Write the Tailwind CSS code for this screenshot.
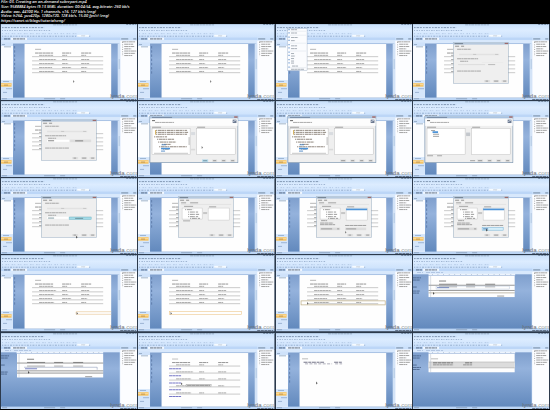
<!DOCTYPE html>
<html lang="en">
<head>
  <meta charset="UTF-8">
  <meta name="viewport" content="width=device-width, initial-scale=1.0">
  <title>03. Creating an on-demand subreport.mp4</title>
  <script src="https://cdn.jsdelivr.net/npm/@tailwindcss/browser@4"></script>
</head>
<body class="bg-black text-white font-['Noto_Sans','Open_Sans',sans-serif] min-h-screen overflow-x-hidden">
  <!-- Shared drawings for the frames -->
  <svg class="absolute w-0 h-0" aria-hidden="true">
    <defs>
      <linearGradient id="bar" x1="0" y1="0" x2="0" y2="1">
        <stop offset="0" stop-color="#c8e0fb"/><stop offset=".4" stop-color="#dcecff"/><stop offset="1" stop-color="#c8dffb"/>
      </linearGradient>
      <linearGradient id="desk" x1="0" y1="0" x2="0" y2="1">
        <stop offset="0" stop-color="#7f9fcd"/><stop offset=".3" stop-color="#94b2dc"/><stop offset="1" stop-color="#6289bd"/>
      </linearGradient>

      <!-- Application window -->
      <g id="app">
        <rect width="136" height="76" fill="#cbe1fb"/>
        <rect width="136" height="16" fill="url(#bar)"/>
        <rect width="136" height="1" fill="#b4cae2"/>
        <g opacity=".6">
          <path d="M52 .8H76" stroke="#62768c" stroke-width=".8" stroke-dasharray="3 .6 2 .5"/>
          <path d="M125 .6H135" stroke="#51657e" stroke-width="1" stroke-dasharray="2 1"/>
          <path d="M1 3.6H43" stroke="#3f5676" stroke-width=".9" stroke-dasharray="1.6 1 2.4 .8 2 1.2"/>
          <path d="M1 6.6H50" stroke="#7892b6" stroke-width="1" stroke-dasharray="1 1.4 1.5 1"/>
          <path d="M1 9.6H76" stroke="#95aed0" stroke-width=".8" stroke-dasharray="1 2.5 1.6 1"/>
          <path d="M1 12.2H89" stroke="#6984ac" stroke-width=".9" stroke-dasharray="1.2 1.2 2 1.2"/>
        </g>
        <rect x="76" y="10.8" width="12" height="2" fill="#f6fbff"/>
        <path d="M80 11.8H84" stroke="#a9b7c7" stroke-width=".6"/>
        <rect y="13.6" width="119" height="2.4" fill="#bcd6f7"/>
        <rect x="10" y="13.7" width="16" height="2.2" fill="#f2f8ff"/>
        <path d="M3 14.9H9M12 14.9H24" stroke="#4a5c74" stroke-width=".9" stroke-dasharray="3 .4"/>
        <rect y="16" width="119" height="3.5" fill="#d8e8fc"/>
        <rect x="119" y="16.5" width="17" height="57" fill="#fcfdff"/>
        <path d="M120 14.9H127M132 14.9H135" stroke="#5d718a" stroke-width=".8"/>
        <path d="M121 17.8H134M123 20.2H132M123 22.5H133M123 24.8H130M123 27H135M123 29.3H134M123 31.5H131" stroke="#8d8d8d" stroke-width=".8" stroke-dasharray="4 .3 2 .3"/>
        <path d="M121.4 18V32" stroke="#8a8a8a" stroke-width=".7" stroke-dasharray="1 1.3"/>
        <rect y="73.4" width="136" height="2.6" fill="#bcd5f4"/>
        <path d="M1 74.6H6M43 74.6H54M59 74.6H64" stroke="#869cb8" stroke-width=".8"/>
        <path d="M119 75.3H135" stroke="#65768d" stroke-width="1" stroke-dasharray="3 .6"/>
      </g>

      <!-- Outline pane and canvas of the layout view -->
      <g id="layout">
        <rect y="19.5" width="12" height="54" fill="#fbfdff"/>
        <rect y="18.5" width="12" height="3.5" fill="#cfe2fa"/>
        <path d="M1 20.5H4M3 22.8H10" stroke="#8ba2bd" stroke-width=".8"/>
        <rect y="56" width="12" height="17.5" fill="#d5e6fb"/>
        <path d="M2 57.4H8M5 64.6H11M2 68.3H6" stroke="#8fa9ca" stroke-width=".8"/>
        <rect y="59" width="10.5" height="3.6" fill="#f6c363"/>
        <rect y="59.6" width="10.5" height="1.4" fill="#fbd996"/>
        <path d="M3 61H7" stroke="#a98549" stroke-width=".7"/>
        <rect x="12" y="19.5" width="106" height="54" fill="url(#desk)"/>
        <path d="M13.6 22V50" stroke="#5c7ba9" stroke-width=".9" stroke-dasharray="2.4 1.8"/>
        <rect x="116.5" y="19.5" width="2.5" height="54" fill="#d3e3f7"/>
        <path d="M118 35V45" stroke="#9db6d4" stroke-width=".6"/>
        <rect x="23.5" y="20" width="86.5" height="53.5" fill="#fefefe"/>
      </g>

      <!-- Report table -->
      <g id="table" opacity=".75">
        <path d="M34 25.3H40" stroke="#8a8a8a" stroke-width=".8"/>
        <path d="M34 29H52M61 29H70M80 29H90" stroke="#666" stroke-width=".9" stroke-dasharray="3 .3 4 .4"/>
        <path d="M31 32.6H102M31 36.8H102M31 40.8H102M31 44.8H102M31 48.6H102" stroke="#8c8c8c" stroke-width=".6"/>
        <path d="M38 31.3H52M61 31.3H66M80 31.3H85M38 35.5H55M61 35.5H66M80 35.5H88M38 39.5H53M61 39.5H67M80 39.5H88M38 43.5H51M61 43.5H70M80 43.5H86M38 47.4H53M61 47.4H66M80 47.4H85" stroke="#777" stroke-width=".8" stroke-dasharray="3 .3 2 .3"/>
      </g>

      <!-- Dialog frame with tabs -->
      <g id="dialog">
        <rect x="40" y="18.2" width="55.5" height="41.3" fill="#5f7f9e" opacity=".6"/>
        <rect x="40.5" y="18.6" width="54.5" height="40.4" fill="#efefef"/>
        <rect x="40.5" y="18.6" width="54.5" height="2" fill="#b6c9de"/>
        <path d="M41.5 19.6H50" stroke="#5d6a7b" stroke-width=".8"/>
        <path d="M91.5 19.4H95" stroke="#9c6a6b" stroke-width="1.2"/>
        <path d="M42 22.2H46M48 22.2H51" stroke="#808080" stroke-width=".8"/>
      </g>
      <g id="dialog-buttons">
        <path d="M71 57H77M80 57H86M88.5 57H94" stroke="#e0e0e0" stroke-width="2.2"/>
        <path d="M72.5 57H75M81 57H85M90 57H93" stroke="#8a8a8a" stroke-width=".8"/>
      </g>
      <g id="options">
        <use href="#dialog"/>
        <path d="M44 25.2H58M44 34.7H65M47 37.2H55M44 47H68" stroke="#969696" stroke-width=".8" stroke-dasharray="4 .3 2 .3"/>
        <path d="M46 30.4H86" stroke="#e2e2e2" stroke-width="1.4"/>
        <path d="M60 30.4H63M82 30.4H85" stroke="#c4c4c4" stroke-width=".9"/>
        <rect x="46" y="38.7" width="22" height="2" fill="#fff"/>
        <rect x="69" y="38.5" width="21" height="2.6" fill="#dedede"/>
        <use href="#dialog-buttons"/>
      </g>

      <!-- Dialog with source tree and column list -->
      <g id="columns">
        <use href="#dialog"/>
        <path d="M43 24.8H48M52 24.8H60M46 28.3H55M71 28.8H78" stroke="#919191" stroke-width=".8"/>
        <path d="M43 26.4H93" stroke="#dcdcdc" stroke-width=".6"/>
        <rect x="44" y="30" width="20" height="11" fill="#fff" stroke="#bbb" stroke-width=".4"/>
        <path d="M47 31.6H55M50 34H60M50 36.3H61M50 38.6H60M52 40.3H62" stroke="#858585" stroke-width=".8" stroke-dasharray="1 .8 4 .3"/>
        <path d="M65 35H69" stroke="#c6c6c6" stroke-width="2"/>
        <rect x="70" y="30" width="21" height="12" fill="#fff" stroke="#bbb" stroke-width=".4"/>
        <use href="#dialog-buttons"/>
      </g>
      <g id="columns-full">
        <use href="#columns"/>
        <rect x="70" y="30.5" width="21" height="1.7" fill="#4e94d8"/>
        <path d="M45 42.6H51M44 45H57M44 46.6H59M69 47.4H90" stroke="#8f8f8f" stroke-width=".8" stroke-dasharray="4 .3"/>
        <rect x="44" y="49.5" width="20" height="2.6" fill="#dcdcdc"/>
        <path d="M45 50.8H56M61 50.8H63" stroke="#8c8c8c" stroke-width=".8"/>
        <rect x="69" y="49.5" width="21" height="2.6" fill="#ddd"/>
        <path d="M70 50.8H80" stroke="#8c8c8c" stroke-width=".8"/>
      </g>

      <!-- Table wizard -->
      <g id="wizard">
        <rect x="11.5" y="14.8" width="88.5" height="47" fill="#7791ad"/>
        <rect x="12.2" y="15.2" width="87.2" height="46" fill="#efefef"/>
        <rect x="12.2" y="15.2" width="87.2" height="2.3" fill="#a9c3e1"/>
        <path d="M14 16.4H34" stroke="#6a7c93" stroke-width=".8"/>
        <path d="M96 16H99.4" stroke="#a3605e" stroke-width="1.3"/>
        <rect x="12.2" y="17.6" width="87.2" height="7.2" fill="#fdfdfd"/>
        <path d="M14 19.6H17" stroke="#555" stroke-width=".9"/>
        <path d="M17 21.4H36" stroke="#969696" stroke-width=".8" stroke-dasharray="4 .3 2 .3"/>
        <rect x="94.5" y="18.6" width="3.8" height="3.4" fill="#6d7a90"/>
        <path d="M95 20.5L98 19" stroke="#d8e2f0" stroke-width=".8"/>
        <path d="M14 26.2H23M59 26.2H67" stroke="#919191" stroke-width=".8"/>
        <rect x="14" y="27.4" width="38" height="26" fill="#fff" stroke="#b5b5b5" stroke-width=".4"/>
        <rect x="58.5" y="27.4" width="38.5" height="26" fill="#fff" stroke="#b5b5b5" stroke-width=".4"/>
        <rect x="53" y="31" width="4" height="3" fill="#d9dce0"/>
        <path d="M64 59.6H70M74 59.6H79M83 59.6H88M92 59.6H97" stroke="#dedede" stroke-width="2.2"/>
        <path d="M65 59.6H69M75 59.6H78M84 59.6H87M93 59.6H96" stroke="#858585" stroke-width=".8"/>
      </g>
      <g id="source-tree">
        <path d="M18 29.3H49M18 31.3H50M18 33.2H49M16 35.8H29M19 38.2H36M20 41H38M24 43.3H33M21 45.7H49M25 48H31" stroke="#857a70" stroke-width=".9" stroke-dasharray="1 .7 4 .3 2.5 .4"/>
        <path d="M17.5 29V33.6" stroke="#d9b768" stroke-width="1.1"/>
        <rect x="23" y="46.7" width="9" height="1.6" fill="#4e94d8"/>
        <path d="M23.5 43.7H28M23 50H27" stroke="#4a85c4" stroke-width=".9"/>
        <path d="M16 52.2H50" stroke="#d2d2d2" stroke-width="1.2"/>
        <path d="M51 36V44" stroke="#a0a0a0" stroke-width=".7"/>
        <path d="M53 48.5H57" stroke="#dadada" stroke-width="1.6"/>
      </g>

      <!-- Report designer canvas -->
      <g id="designer">
        <rect y="19.3" width="118.5" height="54.2" fill="url(#desk)"/>
        <rect x="15.5" y="18.6" width="86.5" height="1.8" fill="#edf4fd"/>
        <path d="M19 19.5H100" stroke="#7f94b0" stroke-width=".7" stroke-dasharray=".6 5"/>
        <path d="M4 17.5H10M13 17.5H30" stroke="#a6bcda" stroke-width=".8" stroke-dasharray="4 1"/>
      </g>

      <g id="mark">
        <text x="109" y="74" font-size="6" fill="#686d73" font-family="Liberation Sans, sans-serif">lynda<tspan fill="#989da2">.com</tspan></text>
      </g>
    </defs>
  </svg>

  <!-- File details -->
  <header class="h-[23px] flex flex-col justify-between px-px text-[4px] leading-[4px] font-medium italic whitespace-nowrap">
    <p>File: 03. Creating an on-demand subreport.mp4</p>
    <p>Size: 9588884 bytes (9.13 MiB), duration: 00:04:54, avg.bitrate: 260 kb/s</p>
    <p>Audio: aac, 44100 Hz, 1 channels, s16, 127 kb/s (eng)</p>
    <p>Video: h264, yuv420p, 1280x720, 128 kb/s, 15.00 fps(r) (eng)</p>
    <p>https://sanet.st/blogs/tutorialseng/</p>
  </header>

  <!-- Frames -->
  <main class="grid grid-cols-4 gap-px px-px mt-px bg-[#2c3a4c]">
    <!-- Row 1 -->
    <svg class="block w-full" viewBox="0 0 136 76" role="img" aria-label="Report preview">
      <use href="#app"/><use href="#layout"/><use href="#table"/>
      <path d="M72 56V58.6L73.4 57.6Z" fill="#777"/>
      <use href="#mark"/>
    </svg>
    <svg class="block w-full" viewBox="0 0 136 76" role="img" aria-label="Report preview">
      <use href="#app"/><use href="#layout"/><use href="#table"/>
      <path d="M72 56V58.6L73.4 57.6Z" fill="#777"/>
      <use href="#mark"/>
    </svg>
    <svg class="block w-full" viewBox="0 0 136 76" role="img" aria-label="Insert menu open">
      <use href="#app"/><use href="#layout"/><use href="#table"/>
      <rect x="11.5" y="4.5" width="19.5" height="42" fill="#fbfcfe" stroke="#9aabc0" stroke-width=".4"/>
      <path d="M15 5.7H21M15 9H21M15 13.5H22M15 16.6H19M15 21.8H21M15 24.6H21M15 29.5H18M15 32H19M15 34.5H18M15 37H18M15 39H18M16 42H22M15 45.2H28" stroke="#949ca6" stroke-width=".8" stroke-dasharray="3 .3"/>
      <path d="M13 5V46" stroke="#6c9ad2" stroke-width="1.2" stroke-dasharray="1.2 2.1 1.2 3"/>
      <path d="M14 7.2H30M14 11.2H30M14 19.2H30M14 27H30M14 43.6H30" stroke="#d2d9e2" stroke-width=".4"/>
      <use href="#mark"/>
    </svg>
    <svg class="block w-full" viewBox="0 0 136 76" role="img" aria-label="Hyperlink dialog">
      <use href="#app"/><use href="#layout"/><use href="#table"/><use href="#options"/>
      <rect x="45" y="38.4" width="46" height="3.6" fill="#efefef"/>
      <path d="M45 40.5H72" stroke="#dadada" stroke-width=".8"/>
      <path d="M75 40.5H82" stroke="#b5b5b5" stroke-width=".9"/>
      <use href="#mark"/>
    </svg>

    <!-- Row 2 -->
    <svg class="block w-full" viewBox="0 0 136 76" role="img" aria-label="Target document">
      <use href="#app"/><use href="#layout"/><use href="#table"/><use href="#options"/>
      <path d="M47 39.7H53M74 39.8H82" stroke="#6c6c6c" stroke-width=".8"/>
      <use href="#mark"/>
    </svg>
    <svg class="block w-full" viewBox="0 0 136 76" role="img" aria-label="Select data">
      <use href="#app"/><use href="#layout"/><use href="#wizard"/><use href="#source-tree"/>
      <rect x="64" y="58.4" width="6" height="2.4" fill="#b4dcee"/>
      <path d="M65 59.6H69" stroke="#6a8999" stroke-width=".8"/>
      <path d="M63.5 45V47.6L65 46.6Z" fill="#777"/>
      <use href="#mark"/>
    </svg>
    <svg class="block w-full" viewBox="0 0 136 76" role="img" aria-label="Select data">
      <use href="#app"/><use href="#layout"/><use href="#wizard"/><use href="#source-tree"/>
      <use href="#mark"/>
    </svg>
    <svg class="block w-full" viewBox="0 0 136 76" role="img" aria-label="Select columns">
      <use href="#app"/><use href="#layout"/><use href="#wizard"/>
      <path d="M18 29.5H22M20 33.2H26M20 35.3H26" stroke="#8c8c8c" stroke-width=".8"/>
      <rect x="19.5" y="30.2" width="5.5" height="1.8" fill="#4e94d8"/>
      <path d="M53 33.5H57" stroke="#c3c7cc" stroke-width="3"/>
      <path d="M14 54.6H20M24 54.6H29" stroke="#a8a8a8" stroke-width="1"/>
      <path d="M57 59.6H62" stroke="#8c8c8c" stroke-width=".8"/>
      <use href="#mark"/>
    </svg>

    <!-- Row 3 -->
    <svg class="block w-full" viewBox="0 0 136 76" role="img" aria-label="Target document">
      <use href="#app"/><use href="#layout"/><use href="#table"/><use href="#options"/>
      <rect x="68" y="39" width="22" height="2.4" fill="#a3dbe8" stroke="#72b8ca" stroke-width=".5"/>
      <path d="M47 40H53M74 40.3H82" stroke="#567883" stroke-width=".7"/>
      <path d="M75 57.6V60.5L76.5 59.2Z" fill="#444"/>
      <use href="#mark"/>
    </svg>
    <svg class="block w-full" viewBox="0 0 136 76" role="img" aria-label="Linked columns">
      <use href="#app"/><use href="#layout"/><use href="#table"/><use href="#columns"/>
      <path d="M45 42.8H52" stroke="#999" stroke-width=".8"/>
      <use href="#mark"/>
    </svg>
    <svg class="block w-full" viewBox="0 0 136 76" role="img" aria-label="Linked columns">
      <use href="#app"/><use href="#layout"/><use href="#table"/><use href="#columns-full"/>
      <path d="M69 53V55.4L70.4 54.4Z" fill="#777"/>
      <use href="#mark"/>
    </svg>
    <svg class="block w-full" viewBox="0 0 136 76" role="img" aria-label="Linked columns">
      <use href="#app"/><use href="#layout"/><use href="#table"/><use href="#columns-full"/>
      <rect x="69" y="49.5" width="21" height="2.6" fill="#d6eefa" stroke="#75b5db" stroke-width=".5"/>
      <path d="M70 50.8H75" stroke="#4b80b6" stroke-width="1"/>
      <path d="M73 50.5V53.4L74.6 52.2Z" fill="#444"/>
      <use href="#mark"/>
    </svg>

    <!-- Row 4 -->
    <svg class="block w-full" viewBox="0 0 136 76" role="img" aria-label="New footer cell">
      <use href="#app"/><use href="#layout"/><use href="#table"/>
      <path d="M110 56.6H75V59.2H110" fill="none" stroke="#e8c592" stroke-width=".6"/>
      <path d="M75.5 57V59.6L77 58.5Z" fill="#666"/>
      <use href="#mark"/>
    </svg>
    <svg class="block w-full" viewBox="0 0 136 76" role="img" aria-label="New footer row">
      <use href="#app"/><use href="#layout"/><use href="#table"/>
      <rect x="31.5" y="56.6" width="72" height="2.6" fill="none" stroke="#edc78c" stroke-width=".6"/>
      <path d="M32.5 57V59.6L34 58.5Z" fill="#666"/>
      <use href="#mark"/>
    </svg>
    <svg class="block w-full" viewBox="0 0 136 76" role="img" aria-label="Row selected">
      <use href="#app"/><use href="#layout"/><use href="#table"/>
      <rect x="25" y="45.8" width="84" height="4" fill="none" stroke="#bfad84" stroke-width=".7"/>
      <path d="M31 47V49.6L32.5 48.5Z" fill="#666"/>
      <use href="#mark"/>
    </svg>
    <svg class="block w-full" viewBox="0 0 136 76" role="img" aria-label="Report designer">
      <use href="#app"/><use href="#designer"/>
      <rect x="15.5" y="20.8" width="86" height="21.2" fill="#fefefe"/>
      <path d="M0 22.8H8M0 25H7M0 32H4M0 36H7M0 38H6" stroke="#4b658d" stroke-width=".9" stroke-dasharray="3 .3"/>
      <path d="M15.5 30.2H101.5M15.5 35.4H101.5" stroke="#555" stroke-width=".6"/>
      <path d="M15.5 37.8H101.5" stroke="#9c907a" stroke-width=".6"/>
      <path d="M17.6 21V42" stroke="#a1aebe" stroke-width=".4"/>
      <path d="M26 26H33M26 29.2H44M53 29.2H62M72 29.2H82" stroke="#777" stroke-width=".9"/>
      <path d="M26 31.8H44M53 31.8H62M72 31.8H82" stroke="#8c8c8c" stroke-width=".7"/>
      <rect x="23" y="31" width="73" height="3" fill="none" stroke="#a5b7d2" stroke-width=".4"/>
      <path d="M24 32.6H36" stroke="#5870b1" stroke-width=".8"/>
      <path d="M20 37V39.6L21.5 38.5Z" fill="#444"/>
      <path d="M84 41H91" stroke="#888" stroke-width=".8"/>
      <use href="#mark"/>
    </svg>

    <!-- Row 5 -->
    <svg class="block w-full" viewBox="0 0 136 76" role="img" aria-label="Report designer">
      <use href="#app"/><use href="#designer"/>
      <rect x="16" y="20.8" width="86" height="23.6" fill="#fefefe"/>
      <path d="M0 22.8H8M0 25H7M0 32H4M0 39H7M0 41H6" stroke="#4b658d" stroke-width=".9" stroke-dasharray="3 .3"/>
      <path d="M16 30H102M16 37.8H102M16 40H102" stroke="#555" stroke-width=".6"/>
      <path d="M18 21V44" stroke="#a1aebe" stroke-width=".4"/>
      <path d="M26 26.2H33M26 29.4H44M53 29.4H62M72 29.4H82" stroke="#777" stroke-width=".9"/>
      <path d="M26 33H44M53 33H62M72 33H82" stroke="#8c8c8c" stroke-width=".7"/>
      <path d="M23 34.2H96V36.6" fill="none" stroke="#7c8bae" stroke-width=".5"/>
      <path d="M24 35.7H36" stroke="#5a66b4" stroke-width=".8"/>
      <path d="M27 38V40.6L28.5 39.5Z" fill="#444"/>
      <path d="M84 43.6H91" stroke="#888" stroke-width=".8"/>
      <use href="#mark"/>
    </svg>
    <svg class="block w-full" viewBox="0 0 136 76" role="img" aria-label="Report with order links">
      <use href="#app"/><use href="#layout"/>
      <g opacity=".75">
        <path d="M34 26H40" stroke="#999" stroke-width=".8"/>
        <path d="M34 29.5H52M61 29.5H70M80 29.5H90" stroke="#666" stroke-width=".9" stroke-dasharray="3 .3 4 .4"/>
        <path d="M31 33H102M31 40H102M31 47H102M31 53.8H102M31 61H102" stroke="#8c8c8c" stroke-width=".6"/>
        <path d="M38 31.8H52M61 31.8H66M80 31.8H85M38 38.8H55M61 38.8H66M80 38.8H88M38 45.8H53M61 45.8H67M80 45.8H88M38 52.7H50M80 52.7H86M38 59.8H53M61 59.8H66M80 59.8H88" stroke="#777" stroke-width=".8" stroke-dasharray="3 .3 2 .3"/>
        <path d="M31 35.8H43M31 42.8H43M31 49.8H43M31 56.6H43M31 63.4H43" stroke="#4a4bb5" stroke-width="1" stroke-dasharray="3 .3"/>
      </g>
      <rect x="48" y="51.2" width="25" height="2.2" fill="#e4e4e4" stroke="#999" stroke-width=".4"/>
      <path d="M49 52.3H72" stroke="#777" stroke-width=".7" stroke-dasharray="4 .3"/>
      <path d="M43 49.5V52L44.5 51Z" fill="#555"/>
      <use href="#mark"/>
    </svg>
    <svg class="block w-full" viewBox="0 0 136 76" role="img" aria-label="Subreport result">
      <use href="#app"/><use href="#layout"/>
      <path d="M26 25.8H32" stroke="#aaa" stroke-width=".8"/>
      <path d="M27.5 29.2H48M58 29.2H66" stroke="#66667c" stroke-width=".9" stroke-dasharray="4 .7 3 .6"/>
      <path d="M29 30.8H56M59 30.8H66" stroke="#8c8c9e" stroke-width=".7" stroke-dasharray="3 1.4"/>
      <path d="M40 48.5V51.4L41.6 50.2Z" fill="#666"/>
      <use href="#mark"/>
    </svg>
    <svg class="block w-full" viewBox="0 0 136 76" role="img" aria-label="Subreport designer">
      <use href="#app"/><use href="#designer"/>
      <rect x="15.5" y="20.8" width="86" height="18.4" fill="#fefefe"/>
      <rect x="15.5" y="29.2" width="86" height="5.6" fill="#dcdcdc"/>
      <path d="M0 22.8H8M0 25H7M0 32H4M0 34.4H8M0 36.4H7" stroke="#4b658d" stroke-width=".9" stroke-dasharray="3 .3"/>
      <path d="M15.5 29H101.5M15.5 34.8H101.5" stroke="#999" stroke-width=".5"/>
      <path d="M17.6 21V39" stroke="#a1aebe" stroke-width=".4"/>
      <path d="M18 25.8H25" stroke="#aaa" stroke-width=".8"/>
      <path d="M20 29.8H40M52 29.8H59" stroke="#666" stroke-width=".9" stroke-dasharray="4 .5"/>
      <path d="M20 31.8H40M50 31.8H59" stroke="#858585" stroke-width=".8" stroke-dasharray="3 .3"/>
      <use href="#mark"/>
    </svg>
  </main>
</body>
</html>
